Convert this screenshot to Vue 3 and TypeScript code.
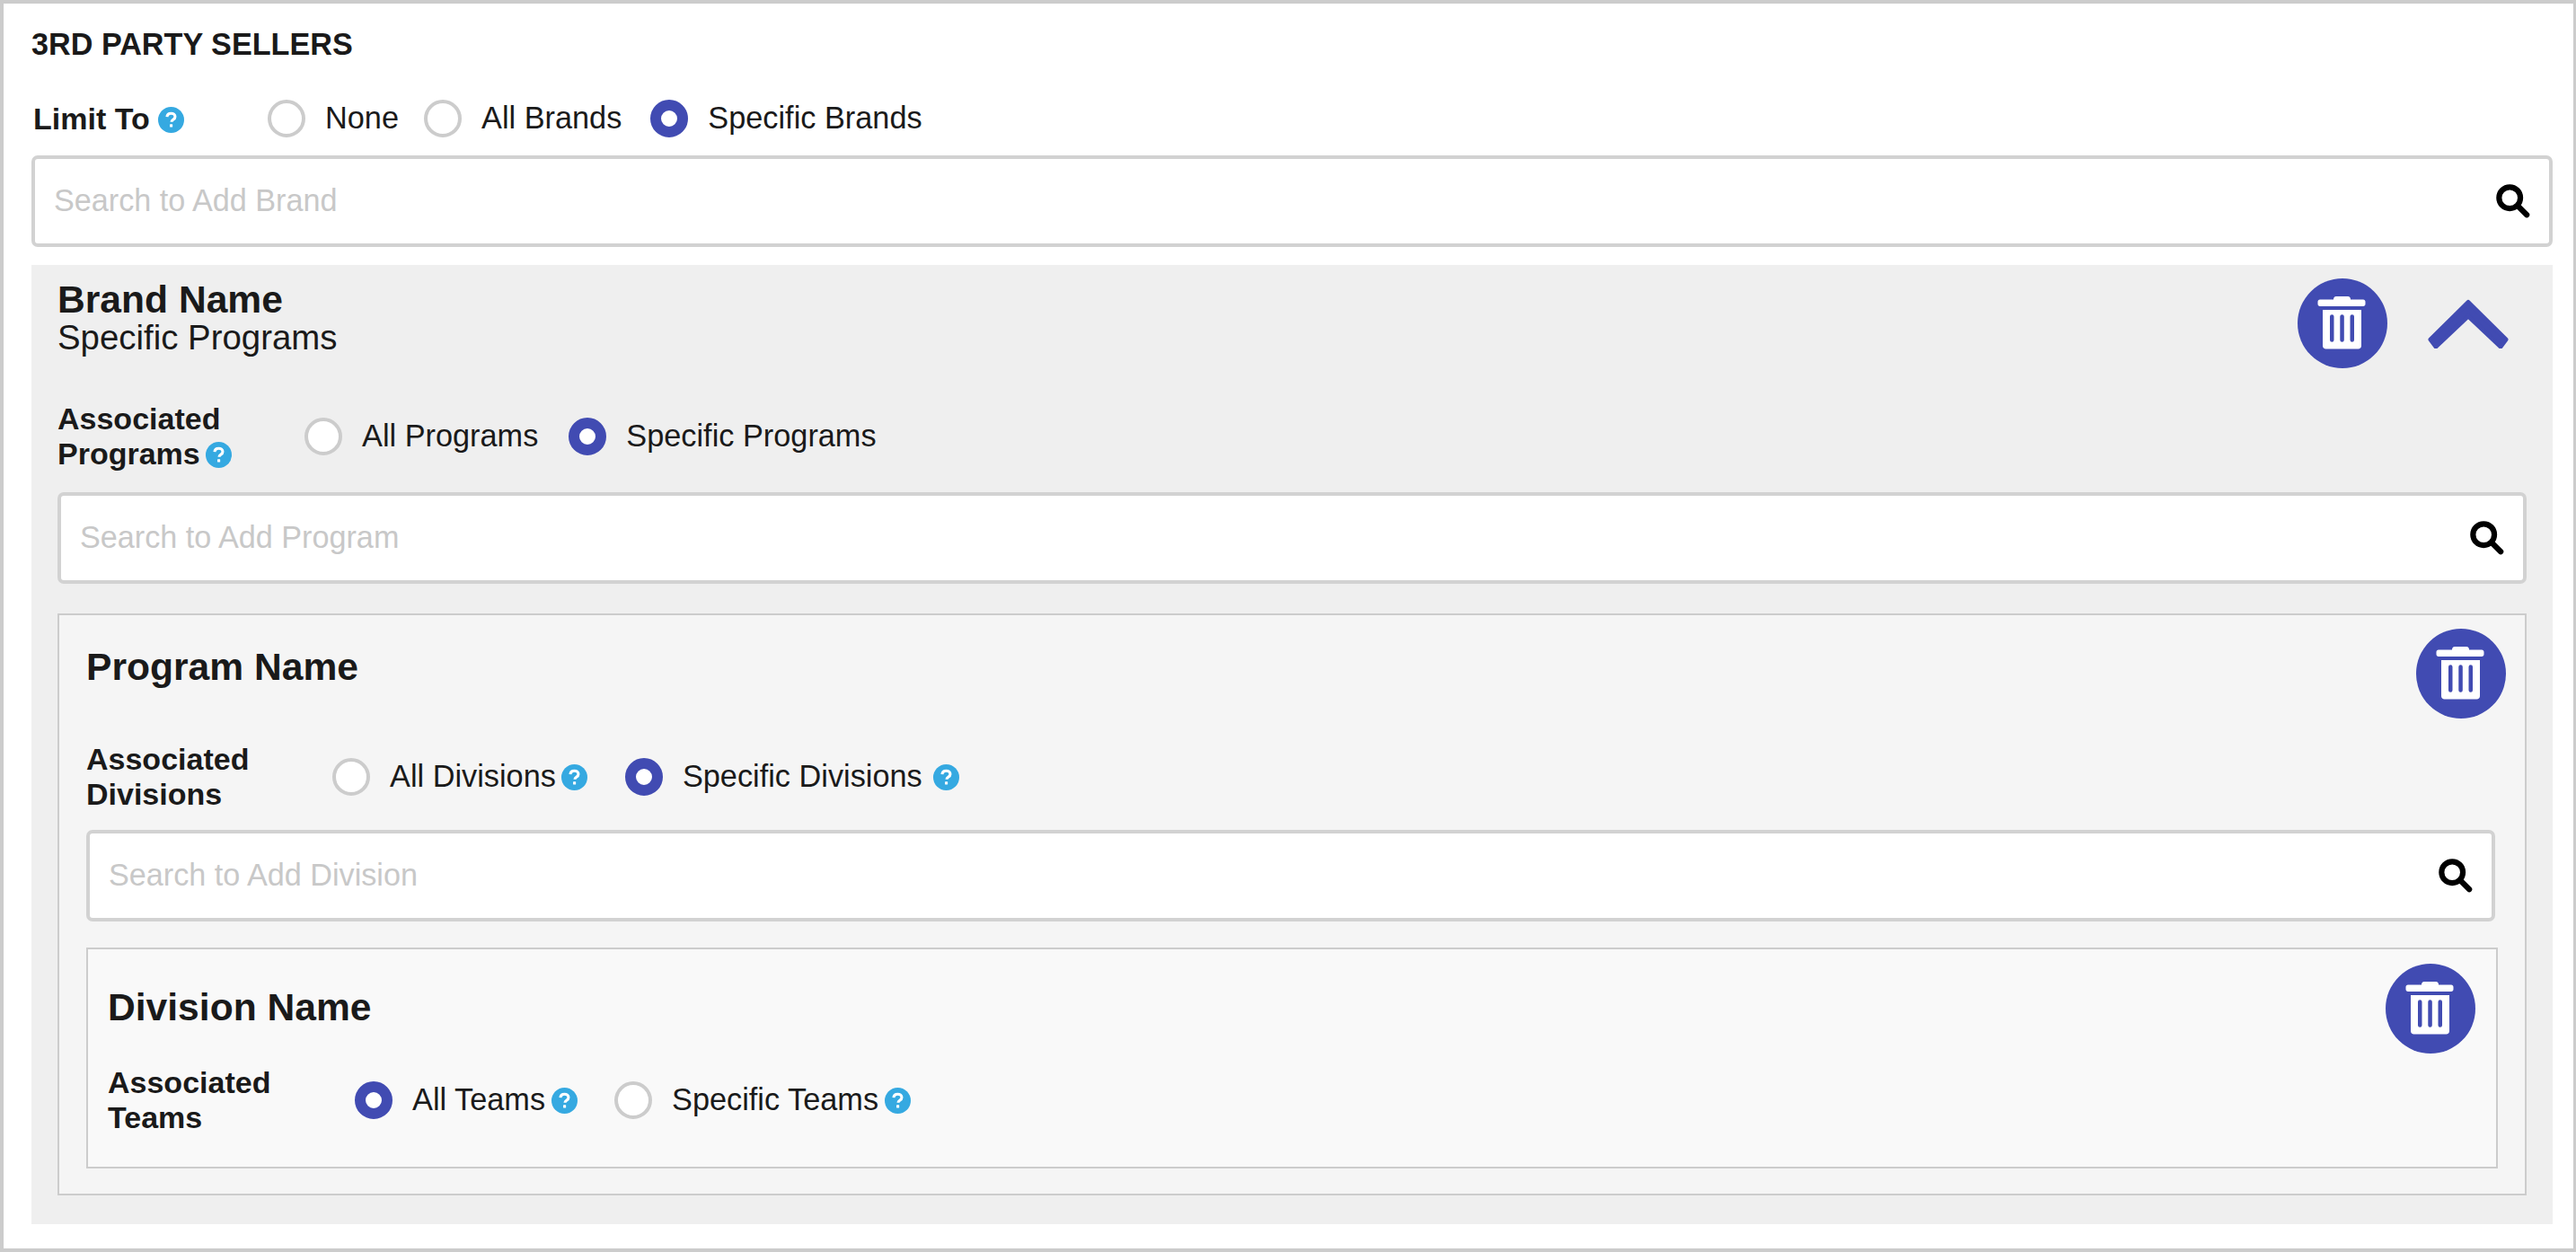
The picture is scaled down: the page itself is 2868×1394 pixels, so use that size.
<script setup lang="ts">
interface Option {
  label: string;
  checked?: boolean;
  help?: boolean;
  helpClass?: string;
}

const limitOptions: Option[] = [
  { label: "None" },
  { label: "All Brands" },
  { label: "Specific Brands", checked: true },
];
const programOptions: Option[] = [
  { label: "All Programs" },
  { label: "Specific Programs", checked: true },
];
const divisionOptions: Option[] = [
  { label: "All Divisions", help: true, helpClass: "near" },
  { label: "Specific Divisions", checked: true, help: true, helpClass: "far" },
];
const teamOptions: Option[] = [
  { label: "All Teams", checked: true, help: true },
  { label: "Specific Teams", help: true },
];
</script>

<template>
  <svg class="sprite" xmlns="http://www.w3.org/2000/svg">
    <symbol id="help" viewBox="0 0 28 28">
      <circle cx="14" cy="14" r="14" fill="#35a9e1" />
      <path
        d="M9.6 10.8c.2-2.5 2-3.8 4.4-3.8 2.5 0 4.3 1.4 4.3 3.5 0 1.7-1 2.5-2.2 3.3-1 .7-1.6 1.2-1.6 2.4"
        fill="none"
        stroke="#fff"
        stroke-width="3"
      />
      <rect x="12.6" y="18.6" width="3" height="3.2" rx=".5" fill="#fff" />
    </symbol>
    <symbol id="search" viewBox="0 0 40 40">
      <circle cx="16" cy="16" r="12.5" fill="none" stroke="#000" stroke-width="6.5" />
      <path d="M25.5 25.5 36 36" stroke="#000" stroke-width="6.5" stroke-linecap="round" />
    </symbol>
    <symbol id="trash" viewBox="0 0 100 100">
      <circle cx="50" cy="50" r="50" fill="#414bb2" />
      <path
        d="M40 23.5c0-2 1-3.500 3-3.500h13c2 0 3 1.500 3 3.500h14c1.500 0 2.500 1 2.500 2.500v2.500c0 1.500-1 2.500-2.500 2.500H25c-1.500 0-2.500-1-2.500-2.500V26c0-1.500 1-2.500 2.500-2.500z"
        fill="#fff"
      />
      <path
        fill-rule="evenodd"
        d="M28 35h43v40c0 2-1.500 3.500-3.500 3.500h-36c-2 0-3.500-1.500-3.500-3.500zM36 42.500v26a2 2 0 0 0 4.500 0v-26a2 2 0 0 0-4.500 0zM47.300 42.500v26a2 2 0 0 0 4.500 0v-26a2 2 0 0 0-4.500 0zM58.500 42.500v26a2 2 0 0 0 4.500 0v-26a2 2 0 0 0-4.500 0z"
        fill="#fff"
      />
    </symbol>
  </svg>

  <div class="page">
    <h2 class="title">3RD PARTY SELLERS</h2>

    <div class="form-row limit">
      <div class="field-label">Limit To <svg class="help"><use href="#help" /></svg></div>
      <div v-for="o in limitOptions" :key="o.label" class="opt">
        <span class="radio" :class="{ on: o.checked }"></span>
        <span class="opt-text">{{ o.label }}</span>
      </div>
    </div>

    <div class="search">
      <input type="text" placeholder="Search to Add Brand" />
      <svg class="search-icon"><use href="#search" /></svg>
    </div>

    <section class="brand">
      <div class="head">
        <div class="brand-titles">
          <div class="name">Brand Name</div>
          <div class="sub">Specific Programs</div>
        </div>
        <svg class="trash"><use href="#trash" /></svg>
        <svg class="chevron" viewBox="0 0 90 55">
          <path
            d="M45 3.500 87 45 81 53 45 19 9 53 3 45z"
            fill="#414bb2"
            stroke="#414bb2"
            stroke-width="5"
            stroke-linejoin="round"
          />
        </svg>
      </div>

      <div class="form-row programs">
        <div class="field-label">Associated<br />Programs <svg class="help tight"><use href="#help" /></svg></div>
        <div v-for="o in programOptions" :key="o.label" class="opt">
          <span class="radio" :class="{ on: o.checked }"></span>
          <span class="opt-text">{{ o.label }}</span>
        </div>
      </div>

      <div class="search search-programs">
        <input type="text" placeholder="Search to Add Program" />
        <svg class="search-icon"><use href="#search" /></svg>
      </div>

      <section class="program">
        <div class="head">
          <div class="name entity-name">Program Name</div>
          <svg class="trash"><use href="#trash" /></svg>
        </div>

        <div class="form-row divisions">
          <div class="field-label">Associated<br />Divisions</div>
          <div v-for="o in divisionOptions" :key="o.label" class="opt" :class="{ 'with-help': o.help }">
            <span class="radio" :class="{ on: o.checked }"></span>
            <span class="opt-text">{{ o.label }}</span>
            <svg v-if="o.help" class="help" :class="o.helpClass"><use href="#help" /></svg>
          </div>
        </div>

        <div class="search search-divisions">
          <input type="text" placeholder="Search to Add Division" />
          <svg class="search-icon"><use href="#search" /></svg>
        </div>

        <section class="division">
          <div class="head">
            <div class="name division-name">Division Name</div>
            <svg class="trash"><use href="#trash" /></svg>
          </div>

          <div class="form-row teams">
            <div class="field-label">Associated<br />Teams</div>
            <div v-for="o in teamOptions" :key="o.label" class="opt" :class="{ 'with-help': o.help }">
              <span class="radio" :class="{ on: o.checked }"></span>
              <span class="opt-text">{{ o.label }}</span>
              <svg v-if="o.help" class="help"><use href="#help" /></svg>
            </div>
          </div>
        </section>
      </section>
    </section>
  </div>
</template>

<style scoped>
.sprite {
  display: none;
}
.page {
  box-sizing: border-box;
  width: 2868px;
  height: 1394px;
  border: 4px solid #ccc;
  border-right-width: 3px;
  padding: 25px 23px 0 31px;
  background: #fff;
  color: #1a1a1a;
  font-family: "Liberation Sans", Arial, sans-serif;
  font-size: 34px;
}
.title {
  margin: 0;
  font-size: 34.2px;
  line-height: 40px;
  font-weight: 700;
}
.form-row {
  display: flex;
  align-items: center;
  height: 78px;
}
.limit {
  height: 42px;
  margin-top: 42px;
}
.limit .field-label {
  width: 263px;
  padding-left: 2px;
  box-sizing: border-box;
}
.limit .field-label + .opt {
  margin-right: 28px;
}
.field-label {
  flex: none;
  width: 275px;
  font-weight: 700;
  line-height: 39px;
}
.divisions .field-label {
  width: 274px;
}
.opt {
  display: flex;
  align-items: center;
  margin-right: 32px;
  white-space: nowrap;
}
.programs .opt {
  margin-right: 34px;
}
.opt.with-help {
  margin-right: 41px;
}
.divisions .opt.with-help {
  margin-right: 42px;
}
.opt-text {
  padding-bottom: 2px;
  font-size: 34.3px;
}
.radio {
  box-sizing: border-box;
  flex: none;
  width: 42px;
  height: 42px;
  margin-right: 22px;
  border: 4px solid #ccc;
  border-radius: 50%;
  background: #fff;
}
.radio.on {
  border: 12px solid #414bb2;
}
.help {
  flex: none;
  width: 29px;
  height: 29px;
  vertical-align: -4px;
}
.help.tight {
  margin-left: -3px;
}
.opt .help {
  margin-left: 7px;
}
.opt .help.near {
  margin-left: 6px;
}
.opt .help.far {
  margin-left: 12px;
}
.search {
  box-sizing: border-box;
  display: flex;
  align-items: center;
  height: 102px;
  margin-top: 20px;
  border: 4px solid #d2d2d2;
  border-radius: 7px;
  background: #fff;
}
.search input {
  flex: 1;
  box-sizing: border-box;
  min-width: 0;
  height: 100%;
  padding: 0 0 2px 21px;
  border: 0;
  outline: 0;
  background: transparent;
  color: #1a1a1a;
  font: inherit;
  font-size: 34.2px;
}
.search input::placeholder {
  color: #c8c8c8;
  opacity: 1;
}
.search-icon {
  flex: none;
  width: 38px;
  height: 38px;
  margin-right: 21px;
}
.brand {
  box-sizing: border-box;
  height: 1068px;
  margin-top: 20px;
  padding: 15px 29px 0 29px;
  background: #efefef;
}
.head {
  display: flex;
  align-items: flex-start;
}
.brand-titles {
  flex: 1;
  padding-top: 2px;
}
.name {
  font-size: 42.6px;
  font-weight: 700;
  line-height: 43px;
}
.sub {
  margin-top: -1px;
  font-size: 38.4px;
  line-height: 44px;
}
.trash {
  flex: none;
  width: 100px;
  height: 100px;
}
.chevron {
  flex: none;
  width: 90px;
  height: 55px;
  margin: 23px 20px 0 45px;
}
.programs {
  margin-top: 37px;
}
.search-programs {
  margin-top: 23px;
}
.program {
  box-sizing: border-box;
  margin-top: 33px;
  padding: 15px 21px 28px 30px;
  border: 2px solid #ccc;
  background: #f5f5f5;
}
.entity-name,
.division-name {
  flex: 1;
}
.entity-name {
  padding-top: 21px;
}
.divisions {
  margin-top: 26px;
}
.search-divisions {
  margin: 20px 12px 0 0;
}
.division {
  box-sizing: border-box;
  margin: 29px 9px 0 0;
  padding: 16px 23px 35px 22px;
  border: 2px solid #ccc;
  background: #f9f9f9;
}
.division-name {
  padding-top: 27px;
}
.teams {
  margin-top: 13px;
}
</style>
